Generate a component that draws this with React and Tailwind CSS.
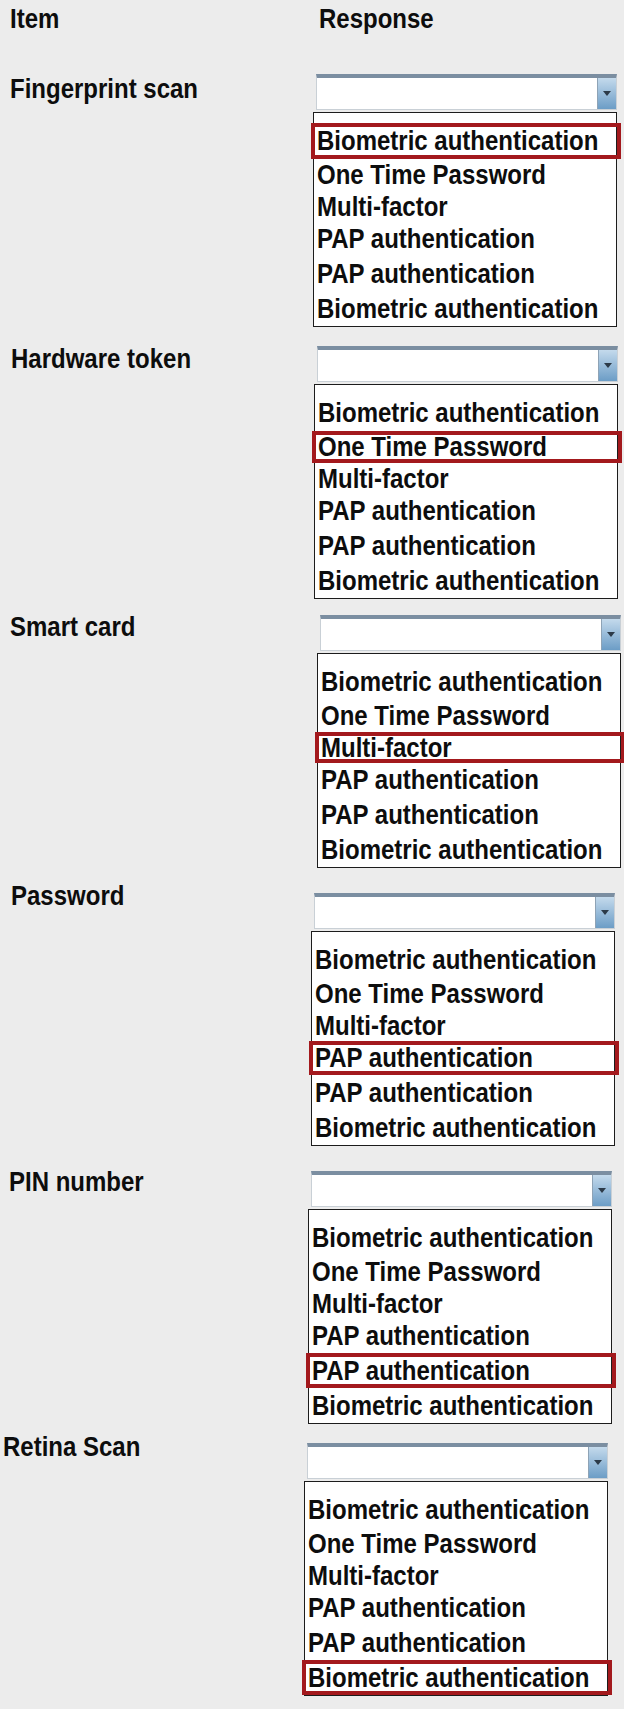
const OPTIONS = [
  "Biometric authentication",
  "One Time Password",
  "Multi-factor",
  "PAP authentication",
  "PAP authentication",
  "Biometric authentication",
];

// row heights inside the open list (px)
const ROW_HEIGHTS = ["h-[36px]", "h-[32px]", "h-[31px]", "h-[34px]", "h-[35px]", "h-[35px]"];

const ITEMS = [
  { label: "Fingerprint scan", pick: 0, wrap: "mt-[30px]", labelPad: "pl-[10px] mt-[12px]", col: "ml-[13px]" },
  { label: "Hardware token", pick: 1, wrap: "mt-[8px]", labelPad: "pl-[11px] mt-[10px]", col: "ml-[14px]" },
  { label: "Smart card", pick: 2, wrap: "mt-[5px]", labelPad: "pl-[10px] mt-[9px]", col: "ml-[17px]" },
  { label: "Password", pick: 3, wrap: "mt-[14px]", labelPad: "pl-[11px] mt-[0px]", col: "ml-[11px]" },
  { label: "PIN number", pick: 4, wrap: "mt-[14px]", labelPad: "pl-[9px] mt-[8px]", col: "ml-[8px]" },
  { label: "Retina Scan", pick: 5, wrap: "mt-[8px]", labelPad: "pl-[3px] mt-[1px]", col: "ml-[4px]" },
];

// the glyphs in this form run a little tall
function Txt({ children }) {
  return <span className="inline-block scale-y-[1.12]">{children}</span>;
}

function SelectBox() {
  return (
    <div className="ml-[3px] flex h-[36px] w-[301px] border border-[#c9d0d6] border-t-[4px] border-t-[#7b8ea1] bg-white">
      <div className="flex-1" />
      <div className="flex w-[19px] items-center justify-center border-l border-[#8ea3b6] bg-gradient-to-b from-[#c4daec] to-[#6c9dc6]">
        <svg width="8" height="5" viewBox="0 0 8 5">
          <path d="M0 0h8L4 5z" fill="#2c3a48" />
        </svg>
      </div>
    </div>
  );
}

function OptionList({ pick }) {
  return (
    <div className="mt-[2px] h-[215px] w-[304px] border border-[#1c1c1c] bg-white pl-[3px] pt-[10px]">
      {OPTIONS.map((opt, i) => (
        <div
          key={i}
          className={`-ml-[6px] -mr-[5px] flex items-center whitespace-nowrap border-[4px] pl-[2px] leading-[28px] ${ROW_HEIGHTS[i]} ${
            i === pick ? "border-[#a3191d]" : "border-transparent"
          }`}
        >
          <Txt>{opt}</Txt>
        </div>
      ))}
    </div>
  );
}

export default function App() {
  return (
    <div className="min-h-[1709px] w-[624px] bg-[#ececec] pt-[5px] font-['Liberation_Sans',Arial,sans-serif] text-[24px] font-bold leading-[28px] text-[#0d0d0d]">
      <div className="flex">
        <div className="w-[300px] pl-[10px]">
          <Txt>Item</Txt>
        </div>
        <div className="ml-[19px]">
          <Txt>Response</Txt>
        </div>
      </div>

      {ITEMS.map((item) => (
        <div key={item.label} className={`flex items-start ${item.wrap}`}>
          <div className={`w-[300px] shrink-0 ${item.labelPad}`}>
            <Txt>{item.label}</Txt>
          </div>
          <div className={`mt-[11px] ${item.col}`}>
            <SelectBox />
            <OptionList pick={item.pick} />
          </div>
        </div>
      ))}
    </div>
  );
}
